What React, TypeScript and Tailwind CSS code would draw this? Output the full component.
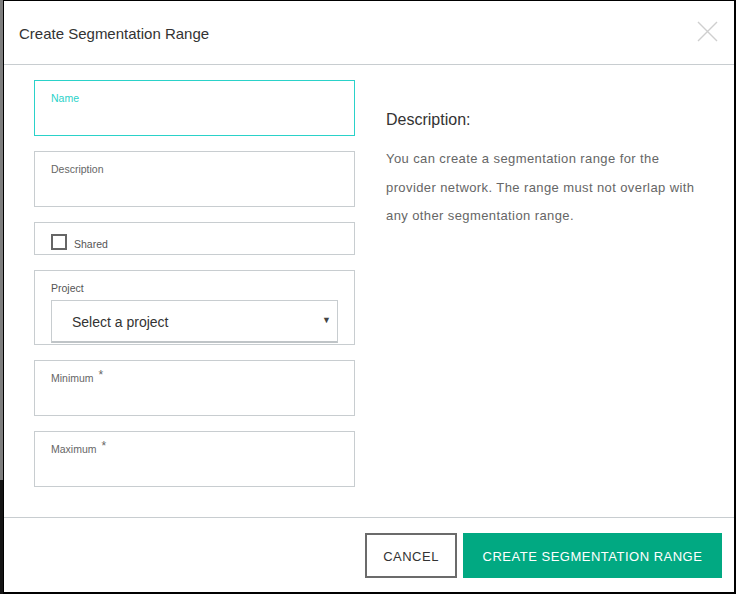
import React from "react";

const font = { fontFamily: '"Liberation Sans", Arial, sans-serif' };

function Field({
  label,
  required,
  active,
  h,
}: {
  label: string;
  required?: boolean;
  active?: boolean;
  h: string;
}) {
  return (
    <div
      className={`border ${active ? "border-[#2ad2c9]" : "border-[#c8cdd0]"} ${h} px-4 pt-[10px]`}
    >
      <div
        className={`text-[10.5px] leading-[14px] ${active ? "text-[#2ad2c9]" : "text-[#666]"}`}
      >
        {label}
        {required && <span className="relative -top-[3px] ml-[5px] text-[12px]">*</span>}
      </div>
    </div>
  );
}

export default function App() {
  return (
    <div className="flex h-[594px] w-[736px] bg-[#151515]" style={font}>
      <div className="flex w-[3px] flex-col">
        <div className="h-[480px] bg-[#7d7d7d]" />
        <div className="flex-1 bg-[#151515]" />
      </div>
      <div className="flex flex-1 flex-col border-t border-l border-r-2 border-b-2 border-black bg-white">
        {/* Header */}
        <div className="flex h-[64px] items-center justify-between border-b border-[#c8cdd0] pl-[15px] pr-[15px]">
          <div className="pt-[4px] text-[15px] text-[#333]">Create Segmentation Range</div>
          <svg width="21" height="21" viewBox="0 0 21 21" className="mb-[2px] mr-[1px]">
            <path d="M1 1 L20 20 M20 1 L1 20" stroke="#cfcfcf" strokeWidth="1.4" fill="none" />
          </svg>
        </div>

        {/* Body */}
        <div className="flex flex-1 border-b border-[#c8cdd0] pl-[30px] pt-[15px]">
          <div className="flex w-[321px] flex-col gap-[15px]">
            <Field label="Name" active h="h-[56px]" />
            <Field label="Description" h="h-[56px]" />
            <div className="flex h-[33px] items-end border border-[#c8cdd0] px-4 pb-[4px]">
              <div className="h-[16px] w-[16px] border-2 border-[#666]" />
              <span className="ml-[7px] text-[10.5px] leading-[12px] text-[#555]">Shared</span>
            </div>
            <div className="h-[75px] border border-[#c8cdd0] px-4 pt-[10px]">
              <div className="text-[10.5px] leading-[14px] text-[#555]">Project</div>
              <div className="mt-[5px] flex h-[43px] items-center justify-between border border-b-2 border-[#c8cdd0] border-b-[#bfc4c7] pl-[20px] pr-[6px] pt-[3px]">
                <span className="text-[14px] text-[#333]">Select a project</span>
                <span className="mb-[3px] text-[9px] text-[#444]">▼</span>
              </div>
            </div>
            <Field label="Minimum" required h="h-[56px]" />
            <Field label="Maximum" required h="h-[56px]" />
          </div>
          <div className="ml-[31px] w-[322px] pt-[29px]">
            <div className="text-[16px] leading-[22px] text-[#333]">Description:</div>
            <p className="mt-[14px] text-[13px] leading-[28.5px] tracking-[0.4px] text-[#666]">
              You can create a segmentation range for the provider network. The range must not overlap with any other segmentation range.
            </p>
          </div>
        </div>

        {/* Footer */}
        <div className="flex h-[74px] items-start justify-end gap-[6px] pr-[12px] pt-[15px]">
          <button className="h-[45px] w-[92px] border-2 border-[#6b6b6b] pt-[3px] text-[13px] tracking-[0.5px] text-[#333]">
            CANCEL
          </button>
          <button className="h-[45px] w-[259px] bg-[#01a982] pt-[3px] text-[13px] tracking-[0.5px] text-white">
            CREATE SEGMENTATION RANGE
          </button>
        </div>
      </div>
    </div>
  );
}
